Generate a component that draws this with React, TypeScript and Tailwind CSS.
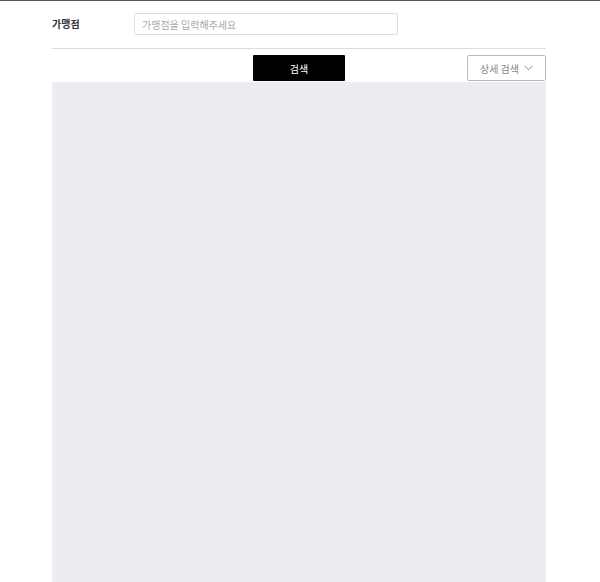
import { FC, useState } from 'react';

const App: FC = () => {
  const [storeName, setStoreName] = useState('');

  return (
    <div
      className="min-h-[582px] bg-white border-t border-[#555555]"
      style={{ fontFamily: '"Noto Sans CJK KR", "Noto Sans", sans-serif' }}
    >
      <div className="w-[494px] ml-[52px]">
        <div className="flex items-center pt-[12px] pb-[13px] border-b border-[#dcdcdc]">
          <label htmlFor="storeName" className="w-[82px] text-[10px] font-bold text-[#333333] leading-none">
            가맹점
          </label>
          <input
            type="text"
            id="storeName"
            value={storeName}
            onChange={(e) => setStoreName(e.target.value)}
            placeholder="가맹점을 입력해주세요"
            className="w-[264px] h-[22px] px-[7px] border border-[#dddddd] rounded-[2px] text-[10px] text-[#333333] placeholder:text-[#aaaaaa] focus:outline-none"
          />
        </div>

        <div className="flex items-center pt-[6px] pb-px">
          <div className="w-[201px]" />
          <button type="button" className="w-[92px] h-[26px] bg-black text-white text-[10px] rounded-[1px]">
            검색
          </button>
          <div className="flex-1" />
          <button
            type="button"
            className="w-[79px] h-[26px] flex items-center justify-center gap-[5px] border border-[#bbbbbb] rounded-[2px] text-[10px] text-[#888888]"
          >
            상세 검색
            <svg width="9" height="6" viewBox="0 0 9 6" fill="none">
              <path d="M0.5 0.8L4.5 4.8L8.5 0.8" stroke="#888888" strokeWidth="1" />
            </svg>
          </button>
        </div>

        <div className="h-[500px] bg-[#ebedf0]" />
      </div>
    </div>
  );
};

export default App;
